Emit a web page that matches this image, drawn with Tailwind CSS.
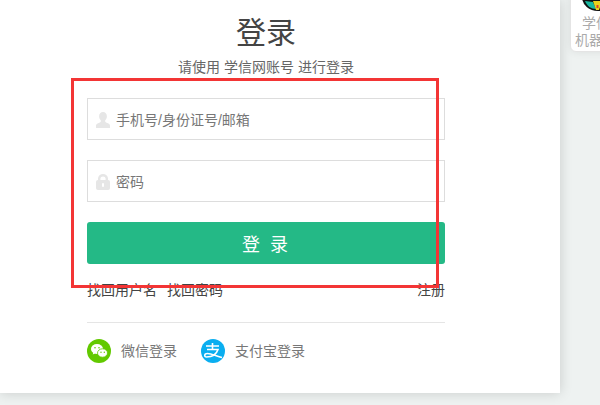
<!DOCTYPE html>
<html lang="zh-CN">
<head>
    <meta charset="UTF-8">
    <title>登录</title>
    <script src="https://cdn.jsdelivr.net/npm/@tailwindcss/browser@4"></script>
</head>
<body class="relative w-[600px] h-[405px] overflow-hidden bg-[#eef2f1] font-['Liberation_Sans','Noto_Sans_CJK_SC',sans-serif]">

    <!-- login card -->
    <main class="w-[560px] h-[393px] bg-white shadow-[0_0_12px_rgba(0,0,0,0.16)] pl-[87px] pt-[14px]">
        <div class="w-[358px]">
            <h1 class="text-[30px] leading-[38px] text-[#444] text-center">登录</h1>
            <p class="mt-[5px] text-sm leading-5 text-[#666] text-center whitespace-pre">请使用 学信网账号 进行登录</p>

            <div class="mt-[21px] h-[42px] border border-[#ddd] flex items-center pl-[8px] gap-[6px]">
                <svg class="w-[14px] h-[16px] mt-[2px]" viewBox="0 0 14 16" aria-hidden="true">
                    <path fill="#e6e6e6" d="M7 0c2.300 0 3.900 1.700 3.900 4.200 0 1.700-.7 3.200-1.700 4.100v1.200c0 .6 1.100 1 2.200 1.500 1.400.6 2.600 1.200 2.600 2.500V16H0v-2.500c0-1.300 1.200-1.900 2.600-2.500 1.100-.5 2.200-.9 2.200-1.500V8.300c-1-.9-1.700-2.400-1.700-4.100C3.100 1.700 4.700 0 7 0z"/>
                </svg>
                <span class="text-[14px] text-[#777] mt-[2px]">手机号/身份证号/邮箱</span>
            </div>

            <div class="mt-[20px] h-[42px] border border-[#ddd] flex items-center pl-[8px] gap-[6px]">
                <svg class="w-[14px] h-[16px] mt-[2px]" viewBox="0 0 14 16" aria-hidden="true">
                    <path fill="none" stroke="#e6e6e6" stroke-width="2.400" d="M3.200 7V4.500a3.800 3.300 0 0 1 7.600 0V7"/>
                    <rect x="0" y="6" width="14" height="10" rx="2" fill="#e6e6e6"/>
                    <rect x="6" y="9" width="2" height="4" rx="1" fill="#fff"/>
                </svg>
                <span class="text-[14px] text-[#777] mt-[2px]">密码</span>
            </div>

            <button class="mt-[20px] w-full h-[42px] rounded-[3px] bg-[#24b986] text-white text-lg tracking-[10px] pl-[8px] pt-[3px]">登录</button>

            <div class="mt-[16px] flex justify-between text-sm leading-5 text-[#444]">
                <div class="flex gap-[10px]"><a>找回用户名</a><a>找回密码</a></div>
                <a>注册</a>
            </div>

            <div class="mt-[22px] pt-[16px] border-t border-[#e5e5e5] flex items-center">
                <span class="w-6 h-6 rounded-full bg-[#62c900] flex items-center justify-center">
                    <svg class="w-[18px] h-[16px]" viewBox="0 0 18 16" aria-hidden="true">
                        <ellipse cx="7" cy="6" rx="6" ry="5" fill="#fff"/>
                        <path fill="#fff" d="M3.500 9l-.8 2.500L6 10z"/>
                        <ellipse cx="12.500" cy="10" rx="5" ry="4.200" fill="#fff" stroke="#62c900" stroke-width=".8"/>
                        <circle cx="5" cy="4.800" r=".8" fill="#62c900"/>
                        <circle cx="9" cy="4.800" r=".8" fill="#62c900"/>
                        <circle cx="11" cy="9.200" r=".7" fill="#62c900"/>
                        <circle cx="14.300" cy="9.200" r=".7" fill="#62c900"/>
                    </svg>
                </span>
                <span class="ml-[10px] text-sm text-[#777]">微信登录</span>
                <span class="ml-[24px] w-6 h-6 rounded-full bg-[#0aaef0] flex items-center justify-center">
                    <svg class="w-[20px] h-[18px]" viewBox="0 0 20 18" aria-hidden="true">
                        <path fill="none" stroke="#fff" stroke-width="1.600" d="M3 4h13M9.500 1v7M4 7.500h11C13.500 12 9 15 3.500 15 1 15 1 11.500 4.500 11.500c4 0 8.500 2.500 14.500 4"/>
                    </svg>
                </span>
                <span class="ml-[10px] text-sm text-[#777]">支付宝登录</span>
            </div>
        </div>
    </main>

    <!-- robot widget, cut off at the window's edge -->
    <aside class="absolute left-[570px] -top-[10px] w-[60px] h-[62px] bg-white border border-[#e4e4e4] rounded-[6px] shadow-[0_0_8px_rgba(0,0,0,0.08)] overflow-hidden text-sm leading-[17px] text-[#aaa] pl-[11px]">
        <svg class="w-[32px] h-[20px] block" viewBox="0 0 32 20" aria-hidden="true">
            <path fill="#111" d="M0 0h32v6a16 14 0 0 1-32 0z"/>
            <path fill="#19b8a0" d="M3 10l8 1 3 7C9 18 5 15 3 10z"/>
            <path fill="#e9d21c" d="M11 10h9l-3 9h-3z"/>
            <path fill="#d8432f" d="M14.500 14h2v3h-2z"/>
            <path fill="#19b8a0" d="M20 10h9c-2 5-5 8-10 8z"/>
        </svg>
        <p class="whitespace-nowrap mt-[4px]">学信</p>
        <p class="whitespace-nowrap -ml-[7px]">机器人</p>
    </aside>

    <!-- red annotation box over the form -->
    <div class="absolute left-[71px] top-[78px] w-[368px] h-[210px] border-[3px] border-[#f33535]"></div>
</body>
</html>
